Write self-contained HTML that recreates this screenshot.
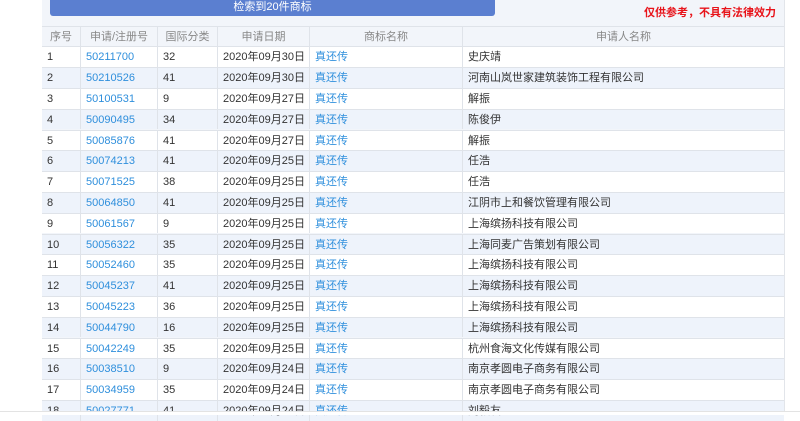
<!DOCTYPE html><html><head><meta charset="utf-8"><style>
body{margin:0;width:800px;height:414px;overflow:hidden;background:#fff;font-family:"Liberation Sans","Noto Sans CJK SC",sans-serif;font-size:11px;color:#333}
.wrap{position:absolute;left:42px;top:0;width:742px;height:414px;background:#f2f5fa;border-right:1px solid #e2e5ea}
.btn{position:absolute;left:8px;top:0;width:445px;height:16px;background:#5b7fd0;border-radius:0 0 3px 3px;color:#fff;text-align:center;font-size:11px;line-height:14px}
.warn{position:absolute;right:8px;top:4px;color:#e8131a;font-weight:bold;font-size:11px}
.row{position:absolute;left:0;width:742px;height:20.8px;box-sizing:border-box;border-top:1px solid #dfe3e9;background:#fff}
.row.e{background:#eef3fb}
.row.h{background:#f2f5fa;color:#888}
.c{position:absolute;top:0;height:100%;line-height:20px;border-left:1px solid #dfe3e9;padding-left:5px;box-sizing:border-box;white-space:nowrap}
.h .c{text-align:center;padding:0}
.l{color:#2f8fdc}
.bot{position:absolute;left:0;top:411px;width:800px;height:3px;background:#fff;border-top:1px solid #e3e3e3}
</style></head><body><div class="wrap">
<div class="btn">检索到20件商标</div>
<div class="warn">仅供参考，不具有法律效力</div>
<div id="t"></div>
</div>
<div class="bot"></div>
<script>
var d=[["50211700","32","2020年09月30日","史庆靖"],["50210526","41","2020年09月30日","河南山岚世家建筑装饰工程有限公司"],["50100531","9","2020年09月27日","解振"],["50090495","34","2020年09月27日","陈俊伊"],["50085876","41","2020年09月27日","解振"],["50074213","41","2020年09月25日","任浩"],["50071525","38","2020年09月25日","任浩"],["50064850","41","2020年09月25日","江阴市上和餐饮管理有限公司"],["50061567","9","2020年09月25日","上海缤扬科技有限公司"],["50056322","35","2020年09月25日","上海同麦广告策划有限公司"],["50052460","35","2020年09月25日","上海缤扬科技有限公司"],["50045237","41","2020年09月25日","上海缤扬科技有限公司"],["50045223","36","2020年09月25日","上海缤扬科技有限公司"],["50044790","16","2020年09月25日","上海缤扬科技有限公司"],["50042249","35","2020年09月25日","杭州食海文化传媒有限公司"],["50038510","9","2020年09月24日","南京孝圆电子商务有限公司"],["50034959","35","2020年09月24日","南京孝圆电子商务有限公司"],["50027771","41","2020年09月24日","刘毅友"]];
var x=[0,38,115,175,267,420,742];
function row(cells,top,cls,links){var s='<div class="row '+cls+'" style="top:'+top+'px">';for(var i=0;i<6;i++){s+='<div class="c'+(links&&(i==1||i==4)?' l':'')+'" style="left:'+x[i]+'px;width:'+(x[i+1]-x[i])+'px;'+(i==0?'border-left:none':'')+'">'+cells[i]+'</div>'}return s+'</div>'}
var h=row(["序号","申请/注册号","国际分类","申请日期","商标名称","申请人名称"],25.5,"h",false);
for(var i=0;i<d.length;i++){h+=row([i+1,d[i][0],d[i][1],d[i][2],"真还传",d[i][3]],46.3+i*20.8,i%2?"e":"",true)}
document.getElementById("t").innerHTML=h;
</script></body></html>
